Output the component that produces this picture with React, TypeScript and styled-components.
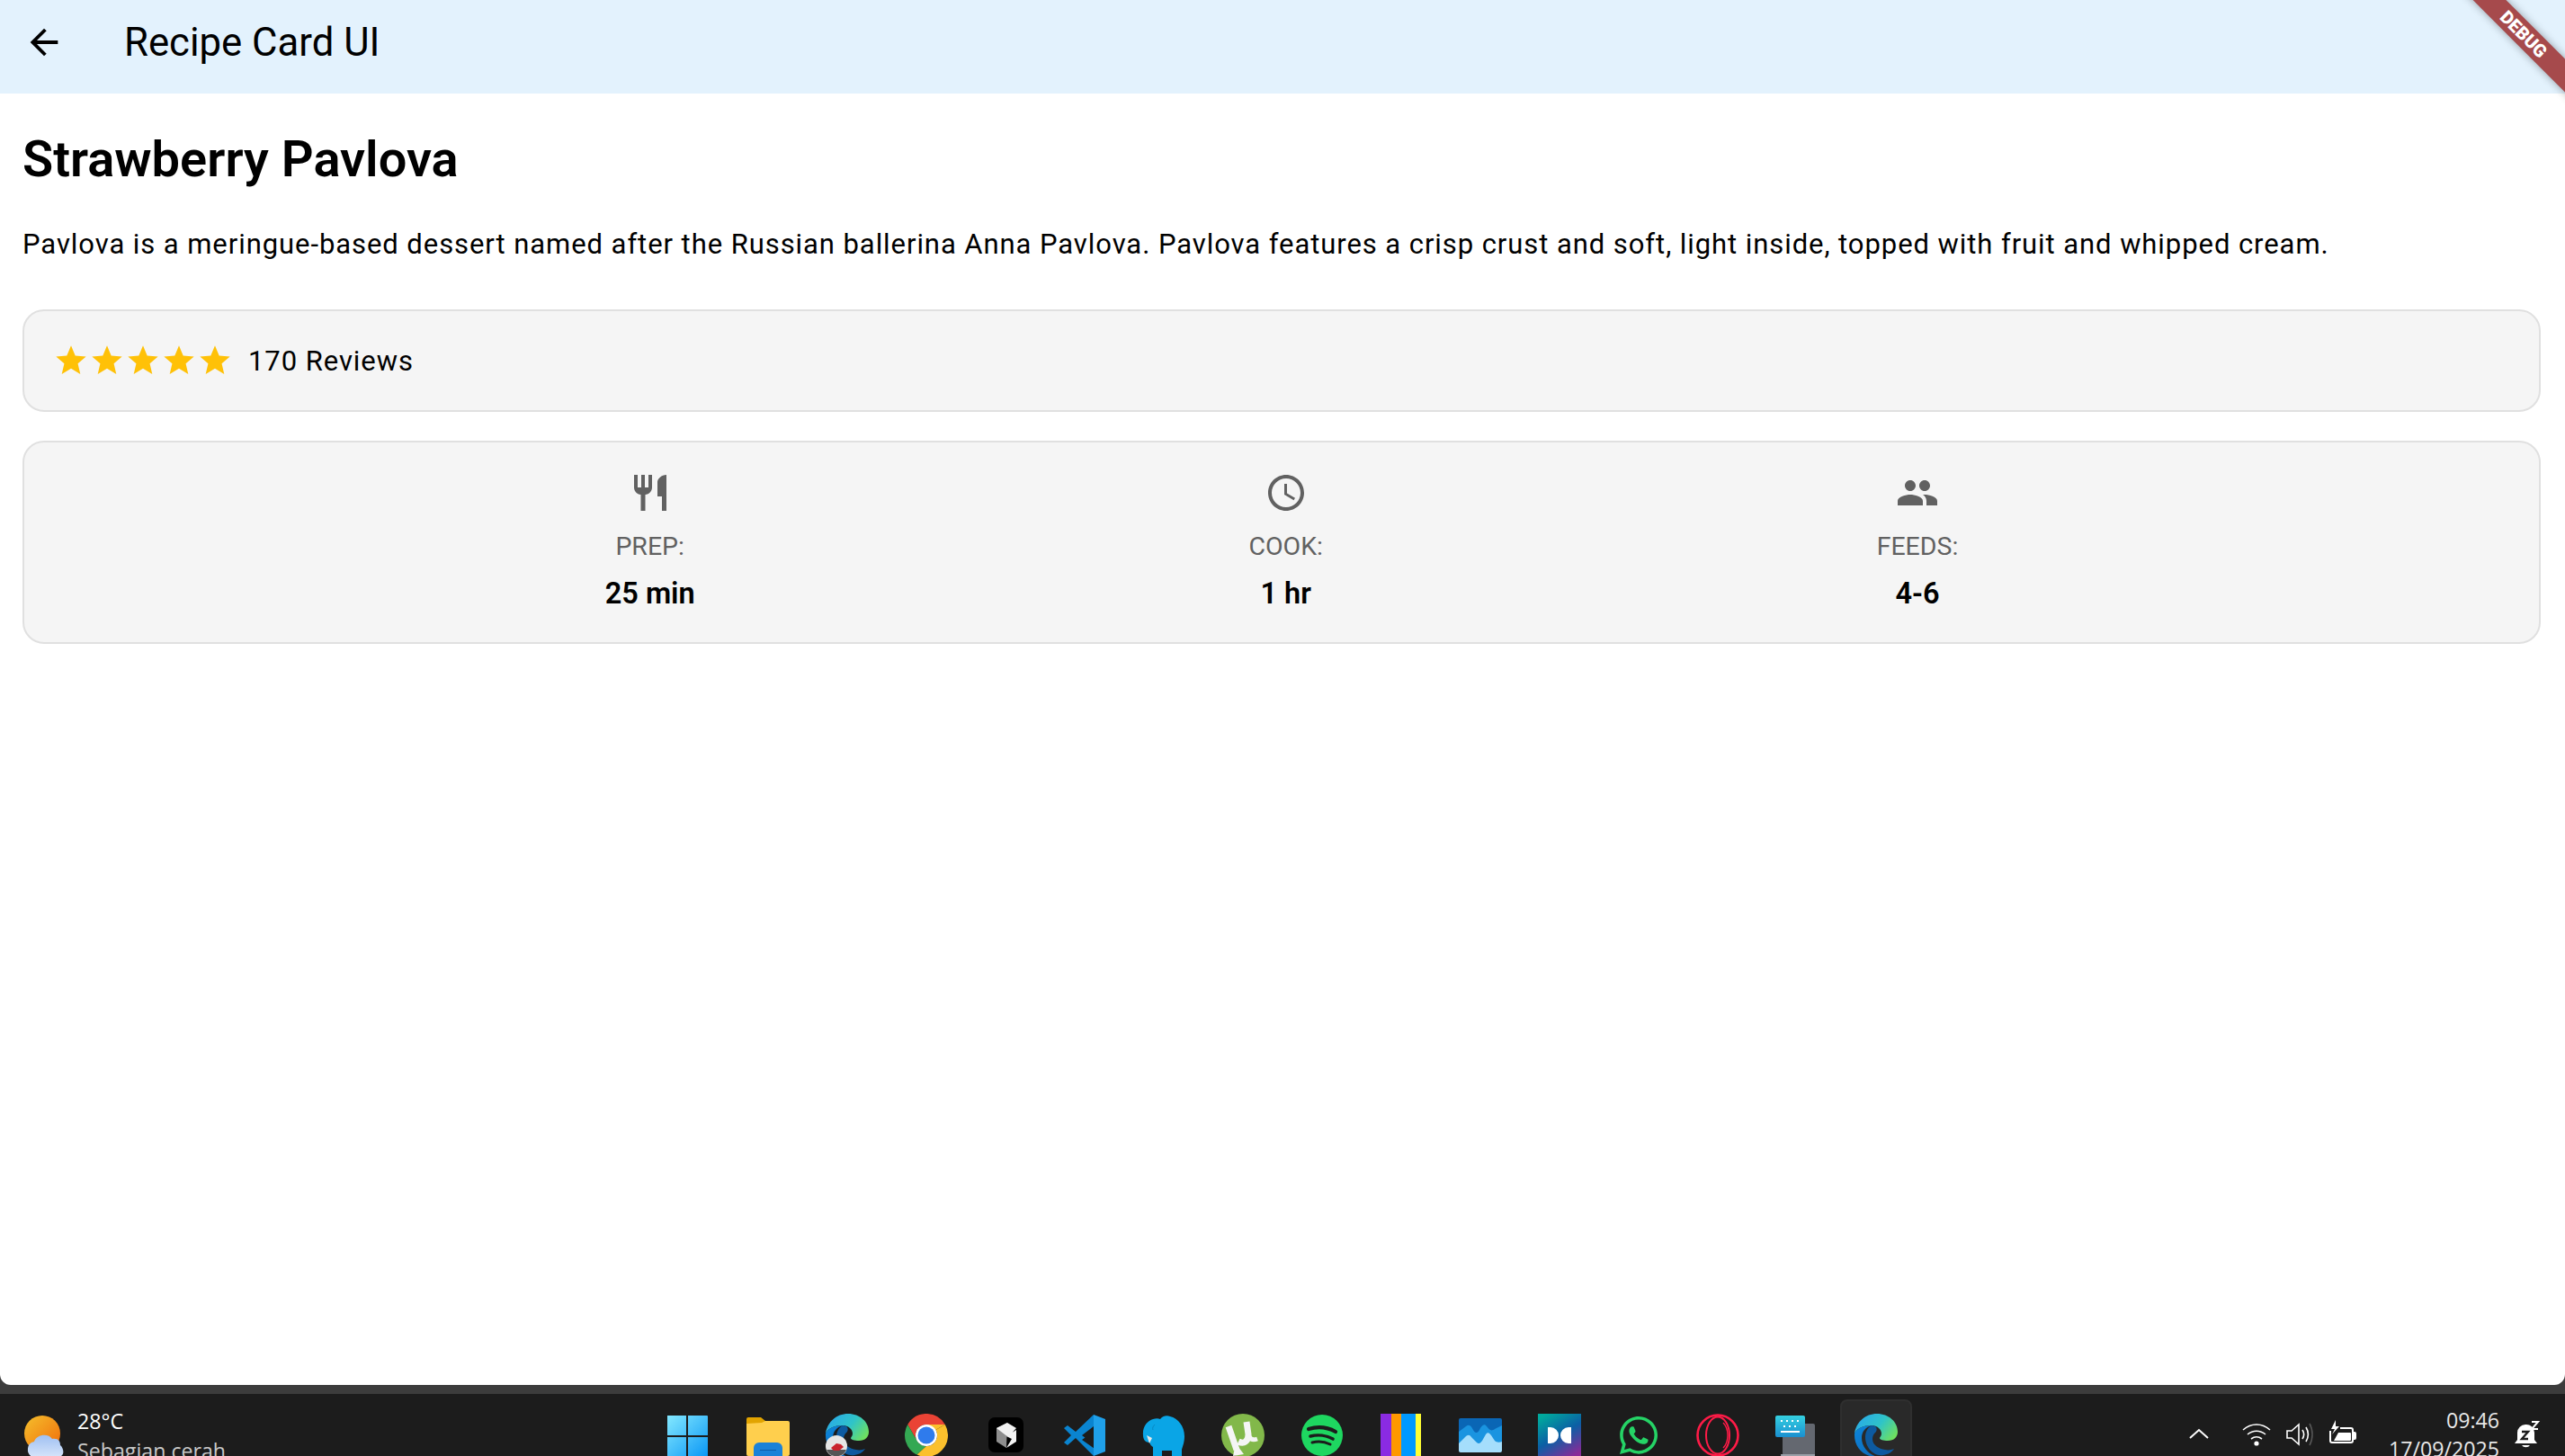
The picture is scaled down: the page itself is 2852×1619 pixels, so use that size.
import styled, { createGlobalStyle } from 'styled-components';
import { FaWhatsapp } from 'react-icons/fa';

const GlobalStyle = createGlobalStyle`
  html, body {
    margin: 0;
    padding: 0;
    height: 100%;
    overflow: hidden;
    background: #3c3c3c;
  }

  #root {
    height: 100%;
  }
`;

const Screen = styled.div`
  height: 100vh;
  display: flex;
  flex-direction: column;
  font-family: Roboto, sans-serif;
  overflow: hidden;
`;

const AppWindow = styled.div`
  position: relative;
  height: 1540px;
  flex: none;
  background: #fff;
  border-radius: 0 0 12px 12px;
  overflow: hidden;
`;

const AppBar = styled.header`
  box-sizing: border-box;
  height: 104px;
  display: flex;
  align-items: center;
  background: #e3f2fd;
  color: #000;
  padding: 0 0 10px 26px;
`;

const BackIcon = styled.svg`
  width: 46px;
  height: 46px;
  flex: none;
  fill: #000;
`;

const AppTitle = styled.h1`
  margin: 0 0 0 66px;
  font-size: 43.7px;
  font-weight: 400;
`;

const DebugBanner = styled.div`
  position: absolute;
  top: 25px;
  right: -54px;
  width: 200px;
  height: 26px;
  line-height: 26px;
  transform: rotate(45deg);
  background: #a64a4c;
  box-shadow: 0 0 10px rgba(0, 0, 0, 0.35);
  color: #fff;
  font-size: 20px;
  font-weight: 900;
  text-align: center;
`;

const Content = styled.main`
  padding: 0 27px 0 25px;
`;

const RecipeName = styled.h2`
  margin: 40px 0 0;
  font-size: 56px;
  line-height: 66px;
  font-weight: 600;
  color: #000;
`;

const Description = styled.p`
  margin: 41px 0 0;
  font-size: 31px;
  line-height: 42px;
  letter-spacing: 0.93px;
  white-space: nowrap;
  color: #000;
`;

const Panel = styled.section`
  box-sizing: border-box;
  background: #f5f5f5;
  border: 2px solid #e0e0e0;
  border-radius: 24px;
`;

const RatingPanel = styled(Panel)`
  margin-top: 51px;
  height: 114px;
  display: flex;
  align-items: center;
  padding-left: 32px;
`;

const Star = styled.svg`
  width: 40px;
  height: 40px;
  flex: none;
  fill: #ffc107;
`;

const ReviewCount = styled.span`
  margin-left: 17px;
  padding-top: 1px;
  font-size: 31px;
  letter-spacing: 0.93px;
  color: #000;
`;

const FactsPanel = styled(Panel)`
  margin-top: 32px;
  height: 226px;
  display: flex;
  justify-content: space-evenly;
  padding: 32px 30px 0;
`;

const Fact = styled.div`
  display: flex;
  flex-direction: column;
  align-items: center;
`;

const FactIcon = styled.svg`
  width: 48px;
  height: 48px;
  fill: #616161;
`;

const FactLabel = styled.div`
  margin-top: 18px;
  font-size: 28.5px;
  line-height: 36px;
  color: #616161;
`;

const FactValue = styled.div`
  margin-top: 15px;
  font-size: 32.5px;
  line-height: 38px;
  font-weight: 600;
  color: #000;
`;

const BarEdge = styled.div`
  height: 10px;
  flex: none;
`;

const Taskbar = styled.footer`
  flex: 1;
  min-height: 0;
  display: grid;
  grid-template-columns: 1fr auto 1fr;
  background: #1c1c1c;
  overflow: hidden;
  font-family: 'Open Sans', 'Noto Sans', sans-serif;
`;

const Weather = styled.div`
  display: flex;
  align-items: flex-start;
  padding: 22px 0 0 26px;
`;

const WeatherIcon = styled.svg`
  width: 46px;
  height: 48px;
  flex: none;
`;

const WeatherText = styled.div`
  margin: -8px 0 0 14px;
  font-size: 23.2px;
  line-height: 33px;
  color: #fff;

  span {
    display: block;
    color: #c8c8c8;
    white-space: nowrap;
  }
`;

const TaskIcons = styled.div`
  display: flex;
  align-items: flex-start;
`;

const TaskSlot = styled.div<{ $active?: boolean }>`
  box-sizing: border-box;
  width: 80px;
  height: 90px;
  margin: 6px 4px 0;
  padding-top: ${props => (props.$active ? 14 : 16)}px;
  display: flex;
  justify-content: center;
  border-radius: 8px;
  background: ${props => (props.$active ? '#292929' : 'none')};
  border: ${props => (props.$active ? '2px solid #2f2f2f' : 'none')};
  color: #25d366;

  svg {
    width: 48px;
    height: 48px;
    flex: none;
  }
`;

const Tray = styled.div`
  display: flex;
  align-items: flex-start;
  justify-content: flex-end;
  padding-right: 26px;
`;

const TrayIcon = styled.svg<{ $gap: number }>`
  width: 32px;
  height: 32px;
  flex: none;
  margin: 29px 0 0 ${props => props.$gap}px;
  fill: none;
  stroke: #fff;
  stroke-width: 1.6;
`;

const Clock = styled.div`
  margin: 13px 0 0 6px;
  width: 152px;
  text-align: right;
  font-size: 23.2px;
  line-height: 32px;
  color: #e8e8e8;
  white-space: nowrap;
`;

function WindowsIcon() {
  return (
    <svg viewBox="2 0 48 48">
      <defs>
        <linearGradient id="win" x1="0" y1="0" x2="1" y2="1">
          <stop offset="0" stopColor="#86eaff" />
          <stop offset="1" stopColor="#0a97f5" />
        </linearGradient>
      </defs>
      <path fill="url(#win)" d="M0 3a1 1 0 0 1 1-1h22v22H0zM25 2h21a1 1 0 0 1 1 1v21H25zM0 26h23v22H0zM25 26h22v22H25z" />
    </svg>
  );
}

function FolderIcon() {
  return (
    <svg viewBox="0 0 48 48">
      <path fill="#e2a400" d="M0 6a2 2 0 0 1 2-2h14l5 4h10v6H0z" />
      <path fill="#ffcf4d" d="M0 11l17-1 4-2h25a2 2 0 0 1 2 2v35a2 2 0 0 1-2 2H2a2 2 0 0 1-2-2z" />
      <path fill="#1b82d8" d="M8 38a6 6 0 0 1 6-6h20a6 6 0 0 1 6 6v9H8z" />
      <path fill="#0f5da8" d="M15 40h18v1H15z" />
    </svg>
  );
}

function EdgeIcon({ id, avatar }: { id: string; avatar?: boolean }) {
  return (
    <svg viewBox="0 0 48 48">
      <defs>
        <linearGradient id={`${id}a`} x1="0" y1="0.2" x2="1" y2="0.7">
          <stop offset="0" stopColor="#29a8ea" />
          <stop offset="0.55" stopColor="#2fc4c8" />
          <stop offset="1" stopColor="#6fe05f" />
        </linearGradient>
        <linearGradient id={`${id}b`} x1="0" y1="0" x2="0.8" y2="1">
          <stop offset="0" stopColor="#0c86dd" />
          <stop offset="1" stopColor="#0f6ab8" />
        </linearGradient>
      </defs>
      <path fill={`url(#${id}a)`} d="M0 22C2 9 12 0 25 0c13 0 23 9 23 20 0 6-4 10-11 10-5 0-9-1-9-3 0-1 2-2 2-5 0-5-5-9-11-9C10 13 3 16 0 22z" />
      <path fill={`url(#${id}b)`} d="M0 22c3-6 10-9 19-9-7 2-11 7-11 14 0 10 8 19 18 21h-2C10 48 0 37 0 24z" />
      <path fill="#0d5aa0" d="M19 13c-5 3-7 8-7 13 0 11 9 22 20 20 6-1 9-3 12-7-3 1-6 2-10 1-7-1-14-5-14-12 0-3 1-5 3-7 2-2 2-4 1-6-1-1-3-2-5-2z" />
      {avatar && (
        <g>
          <circle cx="12" cy="36" r="12" fill="#e6e6e6" />
          <path fill="#555" d="M1 40h22a12 12 0 0 1-22 0z" />
          <path fill="#c9232d" d="M6 38l6-5 5 1 3 3-5 4h-6z" />
        </g>
      )}
    </svg>
  );
}

function ChromeIcon() {
  return (
    <svg viewBox="0 0 48 48">
      <path fill="#ea4335" d="M3.2 12A24 24 0 0 1 44.8 12H24A12 12 0 0 0 13.6 30z" />
      <path fill="#34a853" d="M3.2 12L13.6 30A12 12 0 0 0 24 36L13.6 45.6A24 24 0 0 1 3.2 12z" />
      <path fill="#fbc02d" d="M24 36A12 12 0 0 0 34.4 18L44.8 12A24 24 0 0 1 13.6 45.6z" />
      <path fill="#fbc02d" d="M24 12h20.8l-10.4 6z" />
      <circle cx="24" cy="24" r="12" fill="#fff" />
      <circle cx="24" cy="24" r="9.5" fill="#2f7bec" />
    </svg>
  );
}

function CubeIcon() {
  return (
    <svg viewBox="0 0 48 48">
      <rect x="5" y="4" width="39" height="39" rx="7" fill="#000" />
      <path fill="#8e8e8e" d="M26 10L14 16v15l11 7z" />
      <path fill="#f2f2f2" d="M26 10l10 6-9 10-13-10zM36 18v13L25 38l6-10-6-3z" />
    </svg>
  );
}

function CodeIcon() {
  return (
    <svg viewBox="0 0 48 48">
      <path fill="#0a84d0" d="M34 1L14 20 5 13 1 16l8 8-8 8 4 3 9-8 20 20 4-6-17-12 17-12-4-9z" />
      <path fill="#1fa0ea" d="M34 1l13 5v36l-13 5z" />
      <path fill="#1c1c1c" d="M34 14v20L21 24z" />
    </svg>
  );
}

function ElephantIcon() {
  return (
    <svg viewBox="0 0 48 48">
      <path fill="#0aa5e6" d="M1 24C0 14 6 8 12 6c3-1 6-1 8 0 2-3 7-5 11-3 9 2 16 11 16 22 0 7-2 11-3 15v8H33v-7H22v7H12V37c-2-1-3-3-4-5-4 0-7-3-7-8z" />
      <path fill="#e8e8e8" d="M5 24l6 3-3 6z" />
      <path fill="none" stroke="#0888c4" strokeWidth="1" d="M14 12c-2 2-3 4-2 6" />
    </svg>
  );
}

function TorrentIcon() {
  return (
    <svg viewBox="0 0 48 48">
      <circle cx="24" cy="24" r="24" fill="#82b84a" />
      <path fill="none" stroke="#f5f5f5" strokeWidth="7" d="M8 14l9 26M19 31c6 3 11 0 11-8l-2-14" />
      <path fill="none" stroke="#f5f5f5" strokeWidth="5" d="M30 22c1 6 4 8 10 6" />
      <path fill="#f5f5f5" d="M13 47l3-14 9 12z" />
    </svg>
  );
}

function SpotifyIcon() {
  return (
    <svg viewBox="0 0 48 48">
      <circle cx="24" cy="24" r="23" fill="#1ed760" />
      <path fill="none" stroke="#1c1c1c" strokeLinecap="round" strokeWidth="4.2" d="M9 17c10-3 21-2 30 3" />
      <path fill="none" stroke="#1c1c1c" strokeLinecap="round" strokeWidth="3.6" d="M11 25c8-2 18-1 25 3" />
      <path fill="none" stroke="#1c1c1c" strokeLinecap="round" strokeWidth="3" d="M13 32c7-2 14-1 20 2" />
    </svg>
  );
}

function StripesIcon() {
  return (
    <svg viewBox="0 0 48 48">
      <path fill="#8a2be2" d="M1 0h12v48H1z" />
      <path fill="#ff9800" d="M13 0h11v48H13z" />
      <path fill="#0099ff" d="M24 0h16v48H24z" />
      <path fill="#ffff33" d="M40 0h6v48h-6z" />
    </svg>
  );
}

function ChartIcon() {
  return (
    <svg viewBox="0 0 48 48">
      <rect y="5" width="48" height="36" rx="2" fill="#0a66b5" />
      <path fill="#1a94e0" d="M0 20l8-6c4-3 6 0 8 4s5 4 7 0 5-8 8-4 5 6 9 3l8-4v21H0z" />
      <path fill="#a5defc" d="M0 33l7-7c3-3 5-3 7 0l6 6c2 2 4 1 6-2l4-7c2-3 4-2 6 1l4 6c2 2 5 2 8 1v10a2 2 0 0 1-2 2H2a2 2 0 0 1-2-2z" />
    </svg>
  );
}

function DolbyIcon() {
  return (
    <svg viewBox="0 0 48 48">
      <defs>
        <linearGradient id="dolby" x1="0.2" y1="0" x2="0.8" y2="1">
          <stop offset="0" stopColor="#00a99d" />
          <stop offset="0.5" stopColor="#0b5fa5" />
          <stop offset="1" stopColor="#8a2a98" />
        </linearGradient>
      </defs>
      <rect width="48" height="48" fill="url(#dolby)" />
      <path fill="#fff" d="M11 15h3a9 9 0 0 1 0 18h-3zM37 15h-3a9 9 0 0 0 0 18h3z" />
    </svg>
  );
}

function OperaIcon() {
  return (
    <svg viewBox="0 0 48 48" fill="none" stroke="#ff1b47">
      <circle cx="24" cy="24" r="22.5" strokeWidth="2.6" />
      <ellipse cx="24" cy="24" rx="13" ry="20.5" strokeWidth="2" />
      <path strokeWidth="1.4" d="M30 10c4 4 5 9 5 14s-1 10-5 14" />
    </svg>
  );
}

function KeyboardIcon() {
  return (
    <svg viewBox="0 0 48 48">
      <defs>
        <linearGradient id="kbd" x1="0" y1="0" x2="0" y2="1">
          <stop offset="0" stopColor="#35d0e0" />
          <stop offset="1" stopColor="#1a8fd0" />
        </linearGradient>
      </defs>
      <path fill="#646870" d="M8 11h34a2 2 0 0 1 2 2v33a2 2 0 0 1-2 2H8z" />
      <path fill="#9aa0a8" d="M6 45h38v1a2 2 0 0 1-2 2H8a2 2 0 0 1-2-2z" />
      <rect y="2" width="33" height="24" rx="2" fill="url(#kbd)" />
      <path fill="#fff" d="M6 7h2v2H6zM12 7h2v2h-2zM18 7h2v2h-2zM24 7h2v2h-2zM9 13h2v2H9zM15 13h2v2h-2zM21 13h2v2h-2zM6 19h21v2H6z" />
    </svg>
  );
}

const taskIcons = [
  <WindowsIcon />,
  <FolderIcon />,
  <EdgeIcon id="canary" avatar />,
  <ChromeIcon />,
  <CubeIcon />,
  <CodeIcon />,
  <ElephantIcon />,
  <TorrentIcon />,
  <SpotifyIcon />,
  <StripesIcon />,
  <ChartIcon />,
  <DolbyIcon />,
  <FaWhatsapp />,
  <OperaIcon />,
  <KeyboardIcon />,
  <EdgeIcon id="edge" />,
];

const facts = [
  {
    label: 'PREP:',
    value: '25 min',
    icon: 'M11 9H9V2H7v7H5V2H3v7c0 2.12 1.66 3.84 3.75 3.97V22h2.5v-9.03C11.34 12.84 13 11.12 13 9V2h-2v7zm5-3v8h2.5v8H21V2c-2.76 0-5 2.24-5 4z',
  },
  {
    label: 'COOK:',
    value: '1 hr',
    icon: 'M11.99 2C6.47 2 2 6.48 2 12s4.47 10 9.99 10C17.52 22 22 17.52 22 12S17.52 2 11.99 2zM12 20c-4.42 0-8-3.58-8-8s3.58-8 8-8 8 3.58 8 8-3.58 8-8 8zm.5-13H11v6l5.25 3.15.75-1.23-4.5-2.67z',
  },
  {
    label: 'FEEDS:',
    value: '4-6',
    icon: 'M16 11c1.66 0 2.99-1.34 2.99-3S17.66 5 16 5c-1.66 0-3 1.34-3 3s1.34 3 3 3zm-8 0c1.66 0 2.99-1.34 2.99-3S9.66 5 8 5C6.34 5 5 6.34 5 8s1.34 3 3 3zm0 2c-2.33 0-7 1.17-7 3.5V19h14v-2.5c0-2.33-4.67-3.5-7-3.5zm8 0c-.29 0-.62.02-.97.05 1.16.84 1.97 1.97 1.97 3.45V19h6v-2.5c0-2.33-4.67-3.5-7-3.5z',
  },
];

export default function App() {
  return (
    <Screen>
      <GlobalStyle />
      <AppWindow>
        <AppBar>
          <BackIcon viewBox="0 0 24 24">
            <path d="M20 11H7.83l5.59-5.59L12 4l-8 8 8 8 1.41-1.41L7.83 13H20v-2z" />
          </BackIcon>
          <AppTitle>Recipe Card UI</AppTitle>
        </AppBar>
        <DebugBanner>DEBUG</DebugBanner>
        <Content>
          <RecipeName>Strawberry Pavlova</RecipeName>
          <Description>
            Pavlova is a meringue-based dessert named after the Russian ballerina Anna Pavlova. Pavlova features a crisp crust and soft, light inside, topped with fruit and whipped cream.
          </Description>
          <RatingPanel>
            {[1, 2, 3, 4, 5].map(n => (
              <Star key={n} viewBox="0 0 24 24">
                <path d="M12 17.27L18.18 21l-1.64-7.03L22 9.24l-7.19-.61L12 2 9.19 8.63 2 9.24l5.46 4.73L5.82 21z" />
              </Star>
            ))}
            <ReviewCount>170 Reviews</ReviewCount>
          </RatingPanel>
          <FactsPanel>
            {facts.map(fact => (
              <Fact key={fact.label}>
                <FactIcon viewBox="0 0 24 24">
                  <path d={fact.icon} />
                </FactIcon>
                <FactLabel>{fact.label}</FactLabel>
                <FactValue>{fact.value}</FactValue>
              </Fact>
            ))}
          </FactsPanel>
        </Content>
      </AppWindow>
      <BarEdge />
      <Taskbar>
        <Weather>
          <WeatherIcon viewBox="0 0 46 48">
            <defs>
              <linearGradient id="sun" x1="0" y1="0" x2="1" y2="1">
                <stop offset="0" stopColor="#f5c02c" />
                <stop offset="1" stopColor="#f06a0a" />
              </linearGradient>
              <linearGradient id="cloud" x1="0" y1="0" x2="0" y2="1">
                <stop offset="0" stopColor="#9fc0f2" />
                <stop offset="1" stopColor="#d5e4fa" />
              </linearGradient>
            </defs>
            <circle cx="21" cy="22" r="20" fill="url(#sun)" />
            <path fill="url(#cloud)" d="M12 48a7 7 0 0 1-7-8 8 8 0 0 1 7-9c2-8 16-10 20-3 7-1 9 3 9 7 4 3 6 13-3 13z" />
          </WeatherIcon>
          <WeatherText>
            28°C
            <span>Sebagian cerah</span>
          </WeatherText>
        </Weather>
        <TaskIcons>
          {taskIcons.map((icon, i) => (
            <TaskSlot key={i} $active={i === taskIcons.length - 1}>
              {icon}
            </TaskSlot>
          ))}
        </TaskIcons>
        <Tray>
          <TrayIcon $gap={0} viewBox="0 0 32 32">
            <path strokeWidth="2" d="M6 20l10-9 10 9" />
          </TrayIcon>
          <TrayIcon $gap={32} viewBox="0 0 32 32">
            <path d="M1 11c9-8 21-8 30 0M6 16c6-5 14-5 20 0M10 21c4-3 8-3 12 0" />
            <circle cx="16" cy="26" r="2.6" fill="#fff" stroke="none" />
          </TrayIcon>
          <TrayIcon $gap={16} viewBox="0 0 32 32">
            <path d="M2 12h5l8-7v22l-8-7H2zM19 11c2 3 2 7 0 10M23 8c3 5 3 11 0 16" />
            <path stroke="#555" d="M27 4c4 7 4 17 0 24" />
          </TrayIcon>
          <TrayIcon $gap={16} viewBox="0 0 32 32">
            <path d="M4 9h2M13 9h12a2 2 0 0 1 2 2v12a2 2 0 0 1-2 2H4a2 2 0 0 1-2-2V12" strokeWidth="2" />
            <path fill="#fff" stroke="none" d="M6 23l5-9h13a1 1 0 0 1 1 1v7a1 1 0 0 1-1 1zM27 13h2a2 2 0 0 1 2 2v5a2 2 0 0 1-2 2h-2zM8 0L3 10h4l-3 6 8-9H8z" />
          </TrayIcon>
          <Clock>
            09:46
            <br />
            17/09/2025
          </Clock>
          <TrayIcon $gap={15} viewBox="0 0 32 32">
            <path fill="#fff" stroke="none" d="M14 5a9 9 0 0 1 10 9v8l3 4H2l3-4v-8a9 9 0 0 1 9-9zM10 28h9a5 4 0 0 1-9 0z" />
            <path stroke="#1c1c1c" strokeWidth="2.4" d="M10 13h7l-7 8h7" />
            <path strokeWidth="2" d="M21 2h7l-7 8h7" />
          </TrayIcon>
        </Tray>
      </Taskbar>
    </Screen>
  );
}
